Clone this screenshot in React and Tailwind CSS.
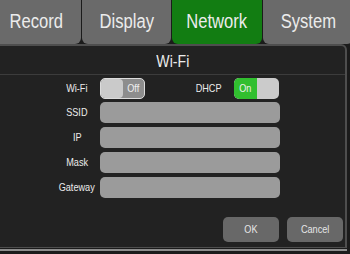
const TABS = [
    { label: 'Record', w: 'w-[90px]' },
    { label: 'Display', w: 'w-[89px]' },
    { label: 'Network', w: 'w-[90px]', active: true },
    { label: 'System', w: 'w-[90px]' },
];

const FIELDS = [
    { label: 'SSID', mt: 'mt-[3px]' },
    { label: 'IP', mt: 'mt-[4px]' },
    { label: 'Mask', mt: 'mt-[4px]' },
    { label: 'Gateway', mt: 'mt-[4px]' },
];

// the device font is a condensed sans; squeeze Liberation Sans to match
function Narrow({ children }) {
    return <span className="inline-block origin-center scale-x-[0.83] whitespace-nowrap">{children}</span>;
}

function Toggle({ on }) {
    if (on) {
        return (
            <div className="flex h-[21px] w-[45px] overflow-hidden rounded-[5px] bg-[#cbcbcb]">
                <div className="flex w-[23px] items-center justify-center rounded-l-[5px] bg-[#31bf2f] text-[11px] text-[#f0f0f0]">
                    <Narrow>On</Narrow>
                </div>
            </div>
        );
    }
    return (
        <div className="flex h-[21px] w-[45px] overflow-hidden rounded-[5px] border border-[#dcdcdc] bg-[#8d8d8d]">
            <div className="w-[22px] rounded-[4px] bg-[#cacaca]" />
            <div className="flex flex-1 items-center justify-center text-[11px] text-[#f0f0f0]">
                <Narrow>Off</Narrow>
            </div>
        </div>
    );
}

export default function App() {
    return (
        <div className="h-[254px] w-[350px] overflow-hidden bg-[#1b1b1b] font-['Liberation_Sans',sans-serif] text-[#ececec]">
            <div className="-ml-[9px] flex h-[44px] gap-[1px]">
                {TABS.map((t) => (
                    <div
                        key={t.label}
                        className={`${t.w} flex shrink-0 items-center justify-center rounded-b-[6px] pb-[2px] text-[20px] ${
                            t.active ? 'bg-[#127d12]' : 'bg-[#6a6a6a]'
                        }`}
                    >
                        <Narrow>{t.label}</Narrow>
                    </div>
                ))}
            </div>

            <div className="mr-[3px] h-[204px] rounded-tr-[6px] border-t-2 border-r-2 border-b border-[#4e4e4e] bg-[#222222]">
                <div className="flex h-[29px] items-center justify-center border-b border-[#3c3c3c] pt-[3px] text-[17px]">
                    <Narrow>Wi-Fi</Narrow>
                </div>

                <div className="mt-[3px] flex h-[21px] items-center">
                    <div className="ml-[54px] w-[46px] text-center text-[11px]"><Narrow>Wi-Fi</Narrow></div>
                    <Toggle on={false} />
                    <div className="ml-[43px] w-[42px] text-center text-[11px]"><Narrow>DHCP</Narrow></div>
                    <div className="ml-[4px]">
                        <Toggle on />
                    </div>
                </div>

                {FIELDS.map((f) => (
                    <div key={f.label} className={`${f.mt} flex h-[21px] items-center`}>
                        <div className="ml-[54px] w-[46px] text-center text-[11px]"><Narrow>{f.label}</Narrow></div>
                        <div className="h-[21px] w-[180px] rounded-[5px] bg-[#9b9b9b]" />
                    </div>
                ))}

                <div className="mt-[19px] flex justify-end gap-[8px] pr-[2px]">
                    <button className="h-[25px] w-[56px] rounded-[5px] bg-[#686868] text-[11px] text-[#e6e6e6]"><Narrow>OK</Narrow></button>
                    <button className="h-[25px] w-[56px] rounded-[5px] bg-[#686868] text-[11px] text-[#e6e6e6]"><Narrow>Cancel</Narrow></button>
                </div>
            </div>

            <div className="mt-[1px] h-[2px] w-[347px] bg-[#8e8e8e]" />
        </div>
    );
}
